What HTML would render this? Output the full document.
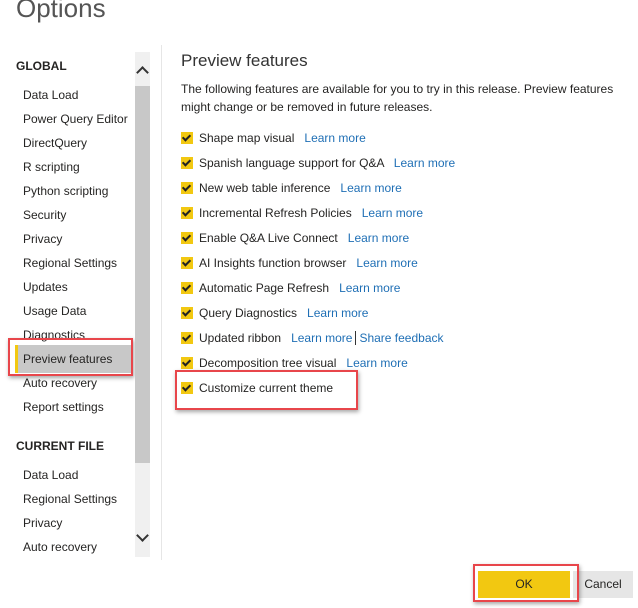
<!DOCTYPE html><html><head><style>
body{margin:0;width:638px;height:608px;background:#fff;position:relative;overflow:hidden;font-family:"Liberation Sans",sans-serif;color:#252423}
.a{position:absolute;white-space:nowrap}
.l{font-size:12px;left:23px;line-height:16px}
.h{font-size:12px;font-weight:bold;left:16px;line-height:16px}
.cb{position:absolute;left:181px;width:12px;height:12px;background:#f2c811}
.cb:after{content:"";position:absolute;left:3px;top:1px;width:3px;height:6px;border:solid #222;border-width:0 2px 2px 0;transform:rotate(45deg)}
.t{font-size:12px;left:199px;line-height:16px}
.lk{color:#1f6fb5}
.red{position:absolute;border:2px solid #e8464b;box-shadow:1px 2px 4px rgba(0,0,0,.35)}
</style></head><body>
<div class="a" style="left:16px;top:-7px;font-size:26px;color:#555;font-weight:300">Options</div>
<div class="a h" style="top:58px">GLOBAL</div>
<div class="a" style="left:15px;top:345px;width:118px;height:28px;background:#c8c8c8"></div>
<div class="a" style="left:15px;top:345px;width:3px;height:28px;background:#f2c811"></div>
<div class="a l" style="top:87px">Data Load</div>
<div class="a l" style="top:111px">Power Query Editor</div>
<div class="a l" style="top:135px">DirectQuery</div>
<div class="a l" style="top:159px">R scripting</div>
<div class="a l" style="top:183px">Python scripting</div>
<div class="a l" style="top:207px">Security</div>
<div class="a l" style="top:231px">Privacy</div>
<div class="a l" style="top:255px">Regional Settings</div>
<div class="a l" style="top:279px">Updates</div>
<div class="a l" style="top:303px">Usage Data</div>
<div class="a l" style="top:327px">Diagnostics</div>
<div class="a l" style="top:351px">Preview features</div>
<div class="a l" style="top:375px">Auto recovery</div>
<div class="a l" style="top:399px">Report settings</div>
<div class="a h" style="top:438px">CURRENT FILE</div>
<div class="a l" style="top:467px">Data Load</div>
<div class="a l" style="top:491px">Regional Settings</div>
<div class="a l" style="top:515px">Privacy</div>
<div class="a l" style="top:539px">Auto recovery</div>
<div class="red" style="left:8px;top:338px;width:121px;height:34px"></div>
<div class="a" style="left:135px;top:52px;width:15px;height:505px;background:#f0f0f0"></div>
<div class="a" style="left:135px;top:86px;width:15px;height:377px;background:#c8c8c8"></div>
<div class="a" style="left:138px;top:68px;width:7px;height:7px;border:solid #333;border-width:2px 0 0 2px;transform:rotate(45deg)"></div>
<div class="a" style="left:138px;top:531px;width:7px;height:7px;border:solid #333;border-width:0 2px 2px 0;transform:rotate(45deg)"></div>
<div class="a" style="left:161px;top:45px;width:1px;height:515px;background:#e6e6e6"></div>
<div class="a" style="left:181px;top:51px;font-size:17px;color:#333">Preview features</div>
<div class="a" style="left:181px;top:80px;font-size:12px;line-height:18px">The following features are available for you to try in this release. Preview features<br>might change or be removed in future releases.</div>
<div class="cb" style="top:132px"></div><div class="a t" style="top:130px">Shape map visual &nbsp; <span class="lk">Learn more</span></div>
<div class="cb" style="top:157px"></div><div class="a t" style="top:155px">Spanish language support for Q&amp;A &nbsp; <span class="lk">Learn more</span></div>
<div class="cb" style="top:182px"></div><div class="a t" style="top:180px">New web table inference &nbsp; <span class="lk">Learn more</span></div>
<div class="cb" style="top:207px"></div><div class="a t" style="top:205px">Incremental Refresh Policies &nbsp; <span class="lk">Learn more</span></div>
<div class="cb" style="top:232px"></div><div class="a t" style="top:230px">Enable Q&amp;A Live Connect &nbsp; <span class="lk">Learn more</span></div>
<div class="cb" style="top:257px"></div><div class="a t" style="top:255px">AI Insights function browser &nbsp; <span class="lk">Learn more</span></div>
<div class="cb" style="top:282px"></div><div class="a t" style="top:280px">Automatic Page Refresh &nbsp; <span class="lk">Learn more</span></div>
<div class="cb" style="top:307px"></div><div class="a t" style="top:305px">Query Diagnostics &nbsp; <span class="lk">Learn more</span></div>
<div class="cb" style="top:332px"></div><div class="a t" style="top:330px">Updated ribbon &nbsp; <span class="lk">Learn more</span><span style="border-left:1px solid #333;margin-left:3px;padding-left:3px" class="lk">Share feedback</span></div>
<div class="cb" style="top:357px"></div><div class="a t" style="top:355px">Decomposition tree visual &nbsp; <span class="lk">Learn more</span></div>
<div class="cb" style="top:382px"></div><div class="a t" style="top:380px">Customize current theme</div>
<div class="red" style="left:175px;top:370px;width:179px;height:36px"></div>
<div class="a" style="left:478px;top:571px;width:92px;height:27px;background:#f2c811;font-size:12px;text-align:center;line-height:27px">OK</div>
<div class="a" style="left:573px;top:571px;width:60px;height:27px;background:#e6e6e6;font-size:12px;text-align:center;line-height:27px">Cancel</div>
<div class="red" style="left:473px;top:564px;width:102px;height:34px"></div>
</body></html>
